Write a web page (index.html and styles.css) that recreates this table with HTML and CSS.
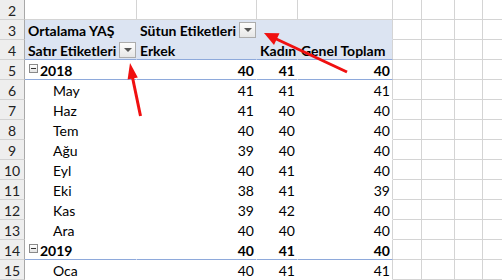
FILE: index.html
```html
<!DOCTYPE html>
<html lang="tr">
<head>
<meta charset="utf-8">
<title>Pivot</title>
<link rel="stylesheet" href="styles.css">
</head>
<body>
<div class="sheet">
  <div class="row">
    <div class="c rh">2</div><div class="c"></div><div class="c"></div><div class="c"></div><div class="c"></div><div class="c"></div><div class="c"></div><div class="c"></div><div class="c"></div>
  </div>
  <div class="row">
    <div class="c rh">3</div>
    <div class="c p hb b">Ortalama YAŞ</div>
    <div class="c p hb b">Sütun Etiketleri<span class="dd"><span class="tri"></span></span></div>
    <div class="c p hb"></div>
    <div class="c p hb d"></div>
    <div class="c"></div><div class="c"></div><div class="c"></div><div class="c"></div>
  </div>
  <div class="row">
    <div class="c rh">4</div>
    <div class="c p hb bl b">Satır Etiketleri<span class="dd"><span class="tri"></span></span></div>
    <div class="c p hb bl b">Erkek</div>
    <div class="c p hb bl b">Kadın</div>
    <div class="c p hb bl d b">Genel Toplam</div>
    <div class="c"></div><div class="c"></div><div class="c"></div><div class="c"></div>
  </div>
  <div class="row">
    <div class="c rh">5</div>
    <div class="c p bl y b"><span class="cb"></span>2018</div>
    <div class="c p bl n b">40</div>
    <div class="c p bl n b">41</div>
    <div class="c p bl d n b">40</div>
    <div class="c"></div><div class="c"></div><div class="c"></div><div class="c"></div>
  </div>
  <div class="row">
    <div class="c rh">6</div>
    <div class="c p m">May</div><div class="c p n">41</div><div class="c p n">41</div><div class="c p d n">41</div>
    <div class="c"></div><div class="c"></div><div class="c"></div><div class="c"></div>
  </div>
  <div class="row">
    <div class="c rh">7</div>
    <div class="c p m">Haz</div><div class="c p n">41</div><div class="c p n">40</div><div class="c p d n">40</div>
    <div class="c"></div><div class="c"></div><div class="c"></div><div class="c"></div>
  </div>
  <div class="row">
    <div class="c rh">8</div>
    <div class="c p m">Tem</div><div class="c p n">40</div><div class="c p n">40</div><div class="c p d n">40</div>
    <div class="c"></div><div class="c"></div><div class="c"></div><div class="c"></div>
  </div>
  <div class="row">
    <div class="c rh">9</div>
    <div class="c p m">Ağu</div><div class="c p n">39</div><div class="c p n">40</div><div class="c p d n">40</div>
    <div class="c"></div><div class="c"></div><div class="c"></div><div class="c"></div>
  </div>
  <div class="row">
    <div class="c rh">10</div>
    <div class="c p m">Eyl</div><div class="c p n">40</div><div class="c p n">41</div><div class="c p d n">40</div>
    <div class="c"></div><div class="c"></div><div class="c"></div><div class="c"></div>
  </div>
  <div class="row">
    <div class="c rh">11</div>
    <div class="c p m">Eki</div><div class="c p n">38</div><div class="c p n">41</div><div class="c p d n">39</div>
    <div class="c"></div><div class="c"></div><div class="c"></div><div class="c"></div>
  </div>
  <div class="row">
    <div class="c rh">12</div>
    <div class="c p m">Kas</div><div class="c p n">39</div><div class="c p n">42</div><div class="c p d n">40</div>
    <div class="c"></div><div class="c"></div><div class="c"></div><div class="c"></div>
  </div>
  <div class="row">
    <div class="c rh">13</div>
    <div class="c p m">Ara</div><div class="c p n">40</div><div class="c p n">40</div><div class="c p d n">40</div>
    <div class="c"></div><div class="c"></div><div class="c"></div><div class="c"></div>
  </div>
  <div class="row">
    <div class="c rh">14</div>
    <div class="c p bl y b"><span class="cb"></span>2019</div>
    <div class="c p bl n b">40</div>
    <div class="c p bl n b">41</div>
    <div class="c p bl d n b">40</div>
    <div class="c"></div><div class="c"></div><div class="c"></div><div class="c"></div>
  </div>
  <div class="row">
    <div class="c rh">15</div>
    <div class="c p m">Oca</div><div class="c p n">40</div><div class="c p n">41</div><div class="c p d n">41</div>
    <div class="c"></div><div class="c"></div><div class="c"></div><div class="c"></div>
  </div>

  <svg class="arrows" width="502" height="280" viewBox="0 0 502 280">
    <line x1="347" y1="72" x2="272" y2="37" stroke="#f01010" stroke-width="3"/>
    <polygon points="264,33 279.5,33.2 274,45" fill="#f01010"/>
    <line x1="140.5" y1="116" x2="132" y2="75" stroke="#f01010" stroke-width="3"/>
    <polygon points="130,63 137.8,77.5 127.6,79.6" fill="#f01010"/>
  </svg>
</div>
</body>
</html>
```
FILE: styles.css
```css
html, body {
  margin: 0;
  padding: 0;
  background: #ffffff;
}

.sheet {
  position: relative;
  width: 502px;
  height: 280px;
  overflow: hidden;
  font-family: Lato, "Liberation Sans", sans-serif;
  font-size: 14px;
  color: #000;
}

.row {
  display: grid;
  grid-template-columns: 25px 112px 120px 41px 95px 29px 33px 28px 40px;
  height: 20px;
}

.c {
  box-sizing: border-box;
  height: 20px;
  border-right: 1px solid #d4d4d4;
  border-bottom: 1px solid #d4d4d4;
  padding: 2px 3px 0 3px;
  line-height: 17px;
  white-space: nowrap;
  display: flex;
  align-items: flex-start;
}

.rh {
  background: #eeeeee;
  border-bottom-color: #d2d2d2;
  border-right-color: #a8a8a8;
  justify-content: center;
  padding: 2px 0 0 0;
  color: #222;
}

.p {
  border-bottom-color: transparent;
  border-right-color: transparent;
}

.p.d {
  border-right-color: #d4d4d4;
}

.hb {
  background: #dce4f2;
}

.p.bl {
  border-bottom-color: #8ea9db;
}

.b {
  font-weight: 700;
}

.n {
  justify-content: flex-end;
  padding-right: 2px;
}

.m {
  padding-left: 28px;
}

.y {
  padding-left: 4px;
}

.cb {
  position: relative;
  box-sizing: border-box;
  width: 9px;
  height: 9px;
  margin-top: 2px;
  margin-right: 2px;
  border: 1px solid #8a8a8a;
  background: linear-gradient(#ffffff, #e4e4e4);
  flex: none;
}

.cb::after {
  content: "";
  position: absolute;
  left: 1px;
  top: 3px;
  width: 5px;
  height: 1px;
  background: #333;
}

.dd {
  box-sizing: border-box;
  width: 17px;
  height: 16px;
  margin-left: auto;
  margin-right: -3px;
  border: 1px solid #acacac;
  background: linear-gradient(#fdfdfd, #e6e6e6);
  display: flex;
  align-items: center;
  justify-content: center;
  flex: none;
}

.tri {
  width: 0;
  height: 0;
  border-left: 4px solid transparent;
  border-right: 4px solid transparent;
  border-top: 4px solid #555;
}

.arrows {
  position: absolute;
  left: 0;
  top: 0;
  pointer-events: none;
}
```
